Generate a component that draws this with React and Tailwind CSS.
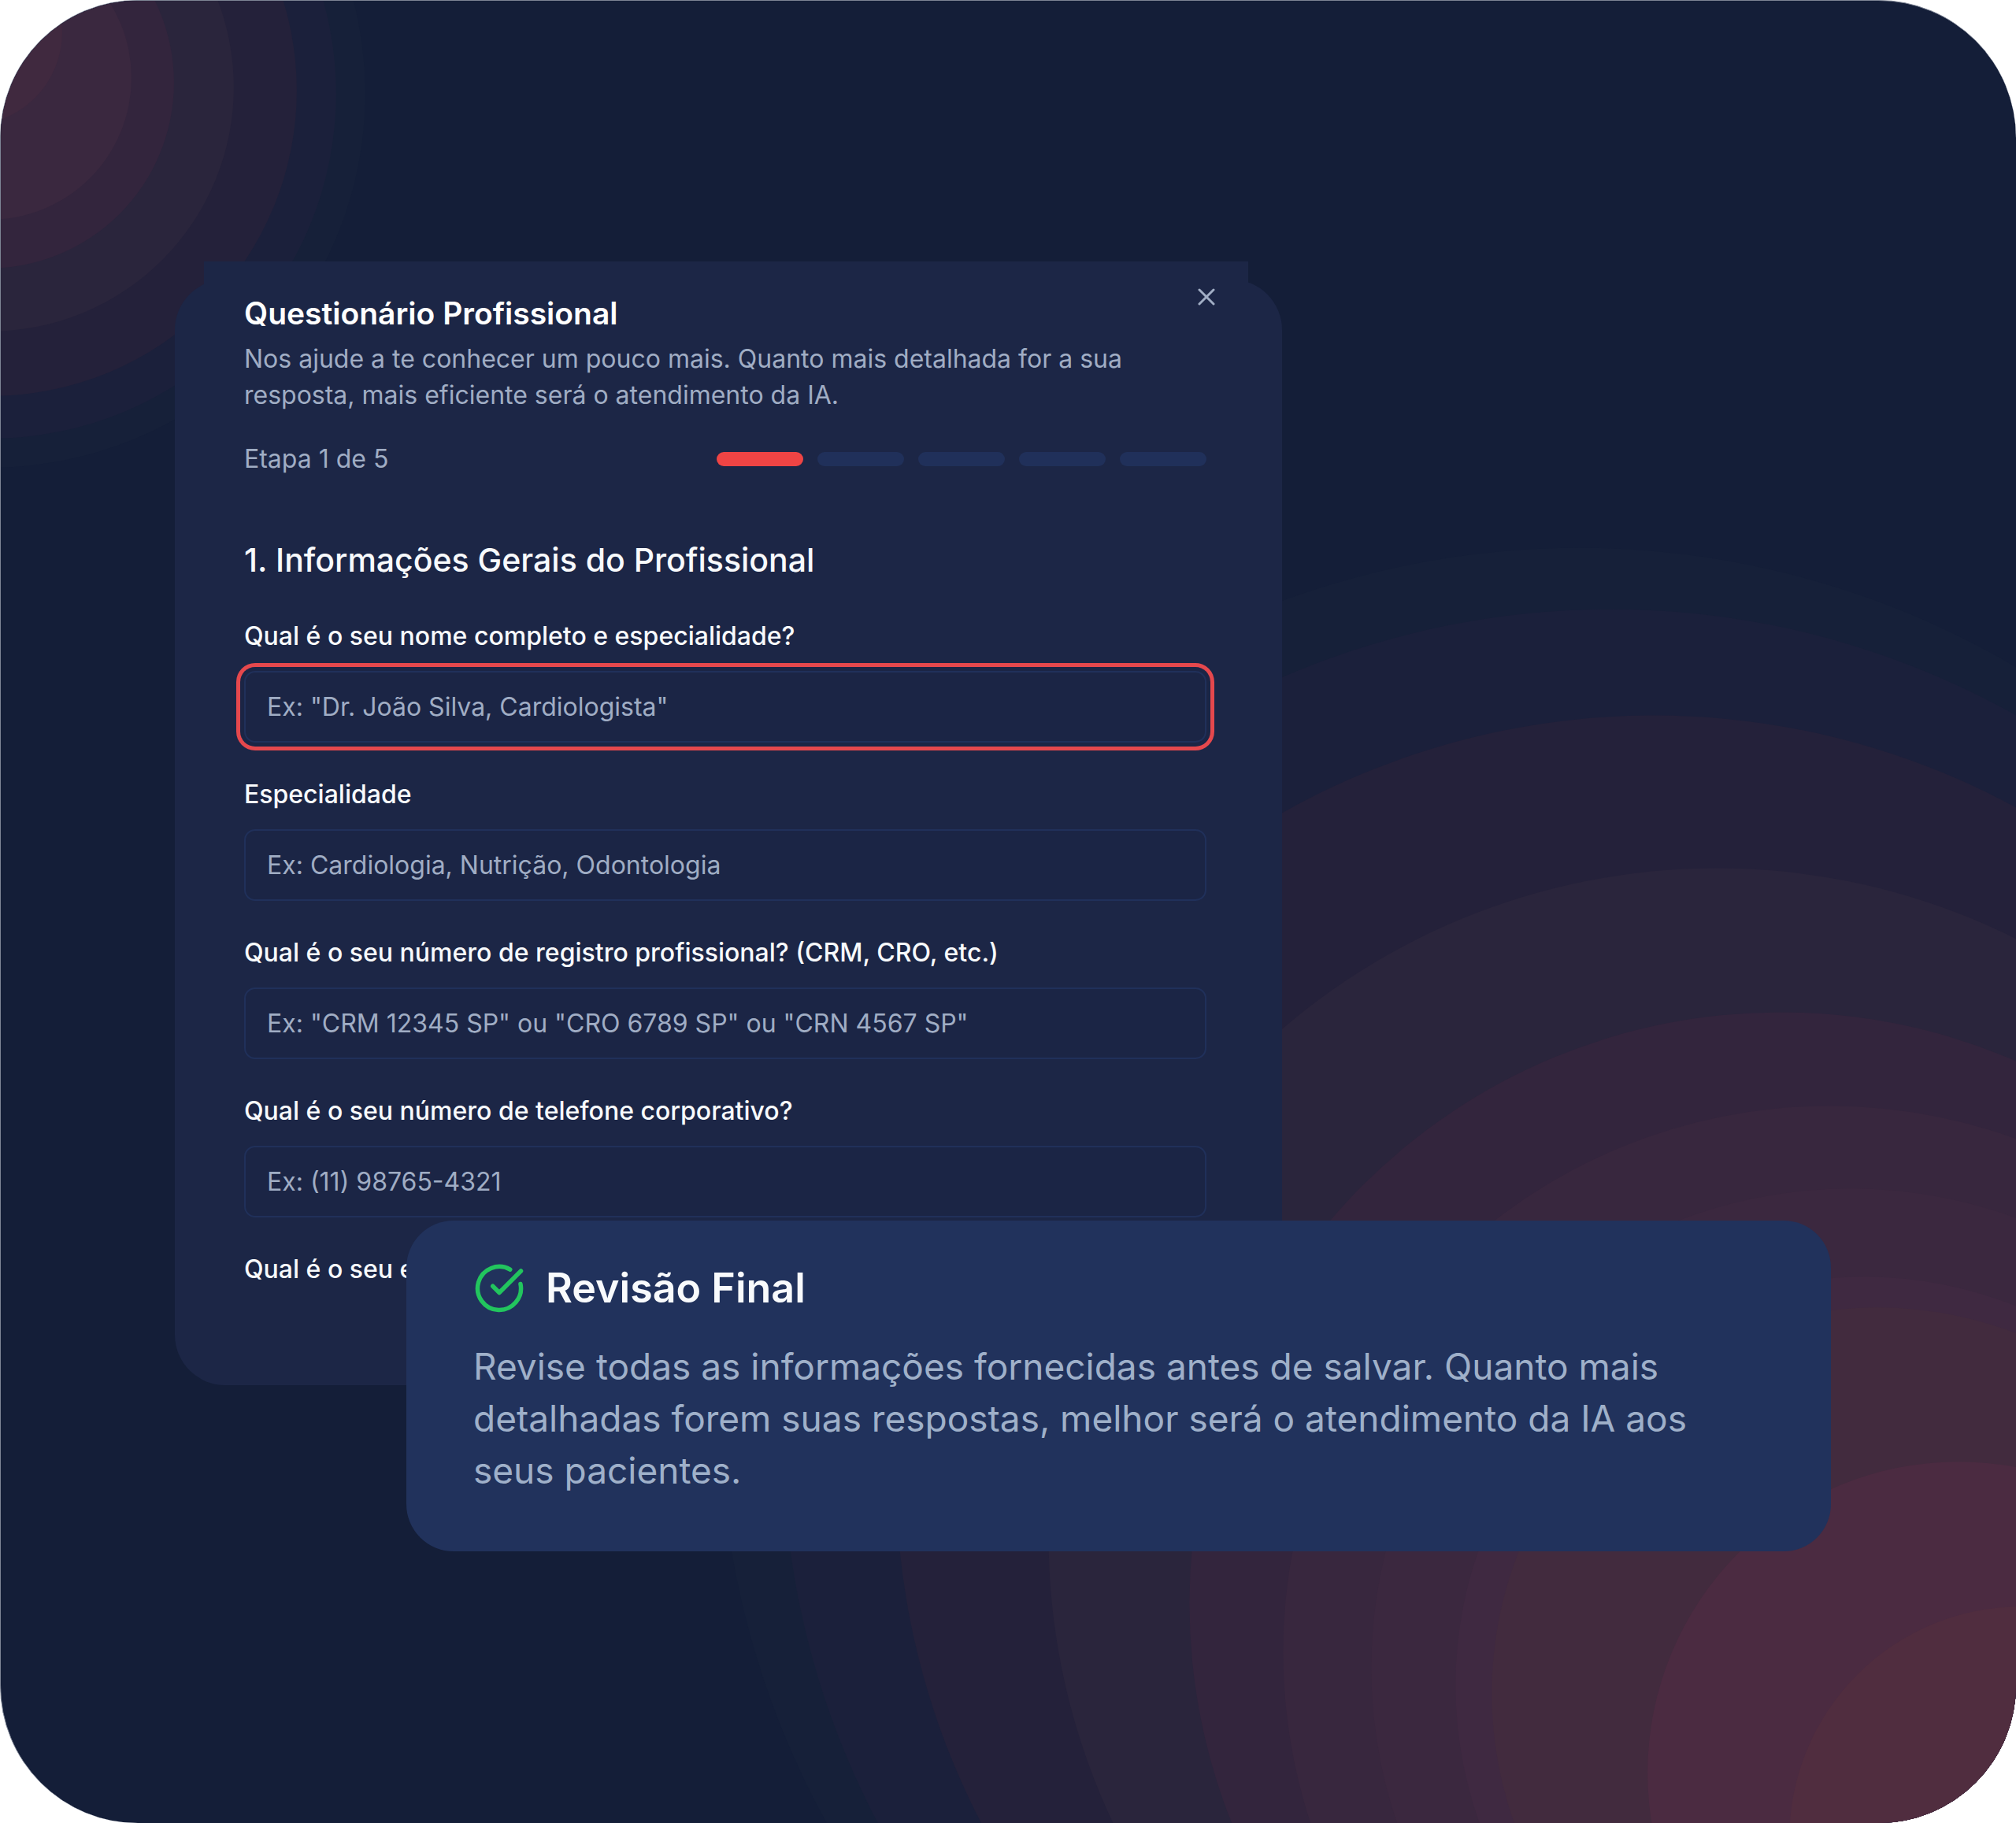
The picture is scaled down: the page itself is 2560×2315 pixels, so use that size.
import React from 'react';
import { CircleCheckBig, X } from 'lucide-react';

const STEPS = 5;

const FIELDS = [
  { id: 'nome', label: 'Qual é o seu nome completo e especialidade?', placeholder: 'Ex: "Dr. João Silva, Cardiologista"', active: true },
  { id: 'especialidade', label: 'Especialidade', placeholder: 'Ex: Cardiologia, Nutrição, Odontologia' },
  { id: 'registro', label: 'Qual é o seu número de registro profissional? (CRM, CRO, etc.)', placeholder: 'Ex: "CRM 12345 SP" ou "CRO 6789 SP" ou "CRN 4567 SP"' },
  { id: 'telefone', label: 'Qual é o seu número de telefone corporativo?', placeholder: 'Ex: (11) 98765-4321' },
];

// Glow rings, outermost first: [cx, cy, r, fill]
const TOP_RINGS = [
  [-12, 118, 475, '#162039'],
  [-12, 118, 438, '#1b203b'],
  [-12, 114, 388, '#24213a'],
  [-14, 110, 310, '#2a253c'],
  [-16, 104, 236, '#33253d'],
  [-14, 98, 180, '#3a283f'],
  [-40, 40, 118, '#40293f'],
];

const BOTTOM_RINGS = [
  [2005, 1787, 1092, '#162039'],
  [2045, 1825, 1052, '#1b203b'],
  [2100, 1871, 963, '#24213a'],
  [2180, 1951, 849, '#2a253c'],
  [2261, 2036, 751, '#33253d'],
  [2323, 2098, 694, '#38273e'],
  [2350, 2118, 609, '#3b283f'],
  [2367, 2140, 519, '#3f2941'],
  [2384, 2150, 490, '#422b3e'],
  [2487, 2251, 395, '#4b2b41'],
  [2567, 2335, 295, '#502d3f'],
];

function Glow() {
  return (
    <svg
      aria-hidden="true"
      className="absolute inset-0 h-full w-full"
      viewBox="0 0 2560 2315"
      preserveAspectRatio="xMidYMid slice"
    >
      {[...TOP_RINGS, ...BOTTOM_RINGS].map(([cx, cy, r, fill], i) => (
        <circle key={i} cx={cx} cy={cy} r={r} fill={fill} />
      ))}
    </svg>
  );
}

function Field({ id, label, placeholder, active }) {
  return (
    <div className="flex flex-col gap-[21px]">
      <label htmlFor={id} className="text-[32px] leading-[46px] font-medium text-slate-50">
        {label}
      </label>
      <input
        id={id}
        type="text"
        placeholder={placeholder}
        className={`h-[91px] w-full rounded-[14px] border-2 border-[#20305a] bg-[#1b2545] px-[27px] text-[32px] text-slate-50 placeholder:text-[#a0adc4] outline-none ${active ? 'ring-5 ring-[#e5484d] ring-offset-5 ring-offset-[#1b2545]' : ''}`}
      />
    </div>
  );
}

function Questionnaire() {
  return (
    <section className="relative ml-[221px] max-w-[1406px]">
      {/* Square header edge sits above the rounded body */}
      <div className="ml-[37px] mr-[43px] h-[23px] bg-[#1c2646]" />
      <div className="rounded-[64px] bg-[#1c2646] pr-[96px] pb-[124px] pl-[88px]">
        <div className="-mr-[53px] -ml-[51px] h-[8px] bg-[#1c2646]" />
        <header className="relative flex flex-col pt-[12px]">
          <h1 className="text-[39px] leading-[46px] font-semibold text-white">Questionário Profissional</h1>
          <p className="mt-[12px] text-[32px] leading-[46px] text-[#a0adc4]">
            Nos ajude a te conhecer um pouco mais. Quanto mais detalhada for a sua resposta, mais eficiente será o
            atendimento da IA.
          </p>
          <button type="button" aria-label="Fechar" className="absolute -top-[4px] -right-[18px] text-[#a0adc4]">
            <X className="size-9" />
          </button>
        </header>

        <div className="mt-[35px] flex items-center justify-between">
          <span className="text-[32px] leading-[46px] text-[#a0adc4]">Etapa 1 de 5</span>
          <div className="flex gap-[18px]">
            {Array.from({ length: STEPS }, (_, i) => (
              <div key={i} className={`h-[18px] w-[110px] rounded-full ${i === 0 ? 'bg-[#ef4444]' : 'bg-[#20305a]'}`} />
            ))}
          </div>
        </div>

        <form className="mt-[73px]">
          <h2 className="text-[41px] leading-[64px] font-medium text-slate-50">1. Informações Gerais do Profissional</h2>
          <div className="mt-[42px] flex flex-col gap-[43px]">
            {FIELDS.map((field) => (
              <Field key={field.id} {...field} />
            ))}
            <span className="text-[32px] leading-[46px] font-medium text-slate-50">Qual é o seu e-mail?</span>
          </div>
        </form>
      </div>
    </section>
  );
}

function ReviewCard() {
  return (
    <section className="relative -mt-[209px] mr-[235px] ml-[515px] rounded-[60px] bg-[#21325c] px-[85px] pt-[46px] pb-[70px]">
      <div className="flex items-center gap-[26px]">
        <CircleCheckBig className="size-[66px] text-[#22c55e]" />
        <h2 className="text-[52px] leading-[80px] font-semibold text-slate-50">Revisão Final</h2>
      </div>
      <p className="mt-[26px] text-[46px] leading-[66px] text-[#9fb0c9]">
        Revise todas as informações fornecidas antes de salvar. Quanto mais detalhadas forem suas respostas, melhor
        será o atendimento da IA aos seus pacientes.
      </p>
    </section>
  );
}

export default function App() {
  return (
    <div className="min-h-screen bg-white font-['Inter',sans-serif]">
      <main className="relative min-h-screen overflow-hidden rounded-[175px] border-t border-l border-[#7d8494] bg-[#141e38] pt-[331px]">
        <Glow />
        <Questionnaire />
        <ReviewCard />
      </main>
    </div>
  );
}
